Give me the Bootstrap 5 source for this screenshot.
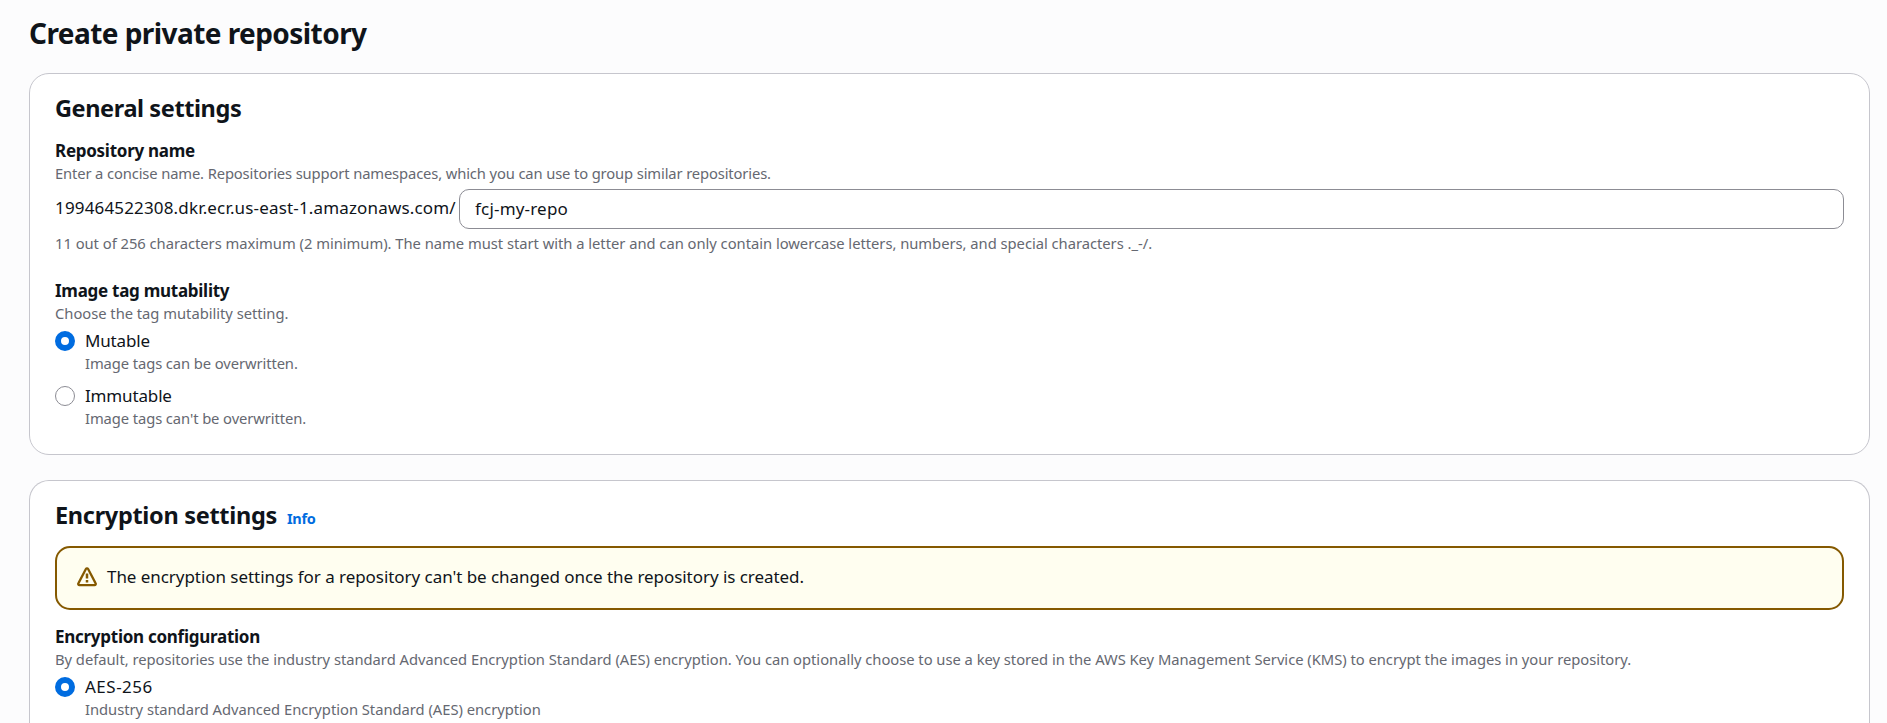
<!DOCTYPE html>
<html lang="en">
<head>
<meta charset="utf-8">
<meta name="viewport" content="width=device-width, initial-scale=1">
<title>Create private repository</title>
<link href="https://cdn.jsdelivr.net/npm/bootstrap@5.3.0/dist/css/bootstrap.min.css" rel="stylesheet">
<style>
  body { font-family: "Noto Sans", "Open Sans", sans-serif; font-size: 17px; line-height: 25px; color: #0f141a; background: #fcfcfd; letter-spacing: -.05px; }
  .page { padding: 14px 17px 0 29px; }
  h1 { font-size: 28px; line-height: 38px; font-weight: 700; letter-spacing: -.56px; margin-bottom: 21px; }
  h2 { font-size: 23.5px; line-height: 30px; font-weight: 700; letter-spacing: -.4px; }
  .panel { border: 1px solid #c6c6cd; border-radius: 20px; padding: 19px 25px 26px; background: #fff; margin-bottom: 25px; }
  .panel-last { border-bottom: 0; border-radius: 20px 20px 0 0; padding-bottom: 4px; margin-bottom: 0; }
  .general-title { margin-bottom: 15px; }
  .field-label { font-weight: 700; letter-spacing: -.27px; }
  .hint { font-size: 14.75px; line-height: 20px; color: #656871; letter-spacing: -.13px; }
  .choice .hint { letter-spacing: -.09px; }
  .hint-wide, .choice .hint-wide { letter-spacing: -.025px; }
  .field-row { margin-top: 6px; }
  .registry { letter-spacing: .16px; line-height: 38px; width: 404px; white-space: nowrap; }
  .name-input.form-control { height: 40px; border: 1px solid #8c8c94; border-radius: 10px; padding: 0 15px 2px; font-size: 17px; letter-spacing: .19px; color: #0f141a; }
  .after-field { margin-top: 4px; }
  .next-field { margin-top: 25px; }
  .form-check.choice { padding-left: 30px; min-height: 0; margin: 5px 0 0; }
  .form-check.next-choice { margin-top: 10px; }
  .form-check.choice .form-check-input { width: 20px; height: 20px; margin: 3px 0 0 -30px; border: 1px solid #8c8c94; }
  .form-check.choice .form-check-input:checked { background: #fff; border: 6px solid #006ce0; }
  .choice label { display: block; letter-spacing: -.15px; }
  .choice .aes-label { letter-spacing: .5px; }
  .enc-head { gap: 10px; }
  .enc-head h2 { letter-spacing: -.31px; }
  .info-link { font-size: 14.5px; font-weight: 700; color: #006ce0; letter-spacing: -.3px; }
  .notice.alert { height: 64px; border: 2px solid #855900; border-radius: 15px; background: #fffef0; color: #0f141a; padding: 0 20px 3px; margin: 15px 0 14px; }
  .notice svg { margin-top: 1px; }
  .notice-text { margin-left: 10px; }
</style>
</head>
<body>
<main class="page vh-100 overflow-hidden">
  <h1>Create private repository</h1>

  <section class="panel">
    <h2 class="general-title">General settings</h2>
    <div class="field-label">Repository name</div>
    <div class="hint">Enter a concise name. Repositories support namespaces, which you can use to group similar repositories.</div>
    <div class="d-flex field-row">
      <span class="registry flex-shrink-0">199464522308.dkr.ecr.us-east-1.amazonaws.com/</span>
      <input class="form-control name-input" type="text" value="fcj-my-repo" aria-label="Repository name">
    </div>
    <div class="hint hint-wide after-field">11 out of 256 characters maximum (2 minimum). The name must start with a letter and can only contain lowercase letters, numbers, and special characters ._-/.</div>

    <div class="field-label next-field">Image tag mutability</div>
    <div class="hint hint-wide">Choose the tag mutability setting.</div>
    <div class="form-check choice">
      <input class="form-check-input" type="radio" name="mutability" id="mutable" checked>
      <label for="mutable">Mutable</label>
      <div class="hint">Image tags can be overwritten.</div>
    </div>
    <div class="form-check choice next-choice">
      <input class="form-check-input" type="radio" name="mutability" id="immutable">
      <label for="immutable">Immutable</label>
      <div class="hint">Image tags can't be overwritten.</div>
    </div>
  </section>

  <section class="panel panel-last">
    <div class="d-flex align-items-baseline enc-head">
      <h2 class="mb-0">Encryption settings</h2>
      <a class="info-link text-decoration-none" href="#">Info</a>
    </div>
    <div class="alert notice d-flex align-items-center" role="alert">
      <svg class="flex-shrink-0" width="20" height="20" viewBox="0 0 16 16" fill="none" stroke="#855900" stroke-width="2" stroke-linejoin="round" aria-hidden="true">
        <path d="M7.1 1.6 1.1 13.1c-.4.7.1 1.3.8 1.3h12.2c.7 0 1.2-.6.8-1.3L8.9 1.6c-.4-.7-1.4-.7-1.8 0Z" stroke-width="1.8"/>
        <path d="M8 5.2v4M8 10.3v2"/>
      </svg>
      <span class="notice-text">The encryption settings for a repository can't be changed once the repository is created.</span>
    </div>
    <div class="field-label">Encryption configuration</div>
    <div class="hint hint-wide">By default, repositories use the industry standard Advanced Encryption Standard (AES) encryption. You can optionally choose to use a key stored in the AWS Key Management Service (KMS) to encrypt the images in your repository.</div>
    <div class="form-check choice">
      <input class="form-check-input" type="radio" name="encryption" id="aes" checked>
      <label for="aes" class="aes-label">AES-256</label>
      <div class="hint hint-wide">Industry standard Advanced Encryption Standard (AES) encryption</div>
    </div>
  </section>
</main>
<script src="https://cdn.jsdelivr.net/npm/bootstrap@5.3.0/dist/js/bootstrap.bundle.min.js"></script>
</body>
</html>
